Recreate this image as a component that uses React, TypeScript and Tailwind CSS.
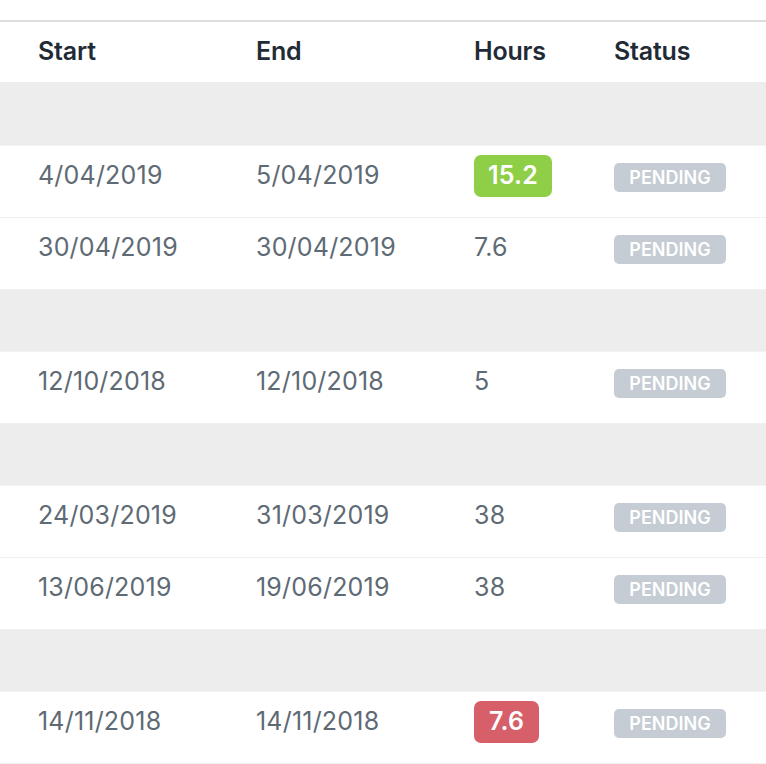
import React from "react";

type Row = {
  start: string;
  end: string;
  hours: string;
  tone?: "green" | "red";
};

// null means an empty grouping band
const rows: (Row | null)[] = [
  null,
  { start: "4/04/2019", end: "5/04/2019", hours: "15.2", tone: "green" },
  { start: "30/04/2019", end: "30/04/2019", hours: "7.6" },
  null,
  { start: "12/10/2018", end: "12/10/2018", hours: "5" },
  null,
  { start: "24/03/2019", end: "31/03/2019", hours: "38" },
  { start: "13/06/2019", end: "19/06/2019", hours: "38" },
  null,
  { start: "14/11/2018", end: "14/11/2018", hours: "7.6", tone: "red" },
];

function Hours({ row }: { row: Row }) {
  if (row.tone === "green")
    return (
      <span className="inline-flex h-[42px] items-center rounded-[7px] bg-[#8fce47] px-[14px] font-semibold text-white">
        {row.hours}
      </span>
    );
  if (row.tone === "red")
    return (
      <span className="inline-flex h-[42px] items-center rounded-[7px] bg-[#d65f69] px-[15px] font-semibold text-white">
        {row.hours}
      </span>
    );
  return <span>{row.hours}</span>;
}

export default function App() {
  return (
    <div
      className="min-h-[764px] w-[766px] bg-white pt-5"
      style={{ fontFamily: "Inter, 'Open Sans', sans-serif" }}
    >
      <div className="border-t-2 border-[#dedede]">
        <div className="flex h-[60px] items-center pl-[38px] text-[25px] font-semibold tracking-[-0.2px] text-[#1f2b36]">
          <div className="w-[218px]">Start</div>
          <div className="w-[218px]">End</div>
          <div className="w-[140px]">Hours</div>
          <div>Status</div>
        </div>

        {rows.map((row, i) =>
          row === null ? (
            <div
              key={i}
              className={`${i === 0 ? "h-[64px]" : "h-[62px]"} border-b border-[#f3f3f3] bg-[#ededed]`}
            />
          ) : (
            <div
              key={i}
              className="flex h-[72px] items-center border-b border-[#f0f0f0] pb-[12px] pl-[38px] text-[25px] tracking-[0.2px] text-[#5e6a74]"
            >
              <div className="w-[218px]">{row.start}</div>
              <div className="w-[218px]">{row.end}</div>
              <div className="w-[140px]">
                <Hours row={row} />
              </div>
              <div>
                <span className="inline-flex h-[29px] w-[112px] items-center justify-center rounded-[5px] bg-[#c5ccd3] text-[18px] font-semibold tracking-normal text-white">
                  PENDING
                </span>
              </div>
            </div>
          )
        )}
      </div>
    </div>
  );
}
